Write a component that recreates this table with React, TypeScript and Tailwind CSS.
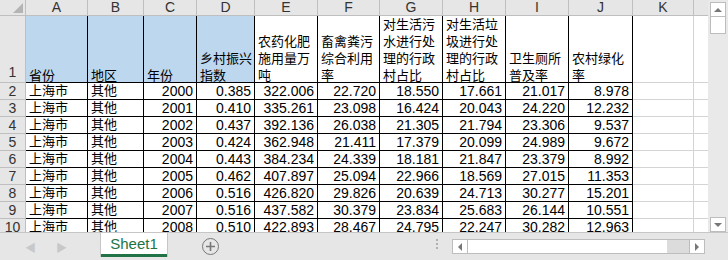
import React from 'react';

type Col = { key: string; w: number; head: string[]; blue?: boolean };

const COLS: Col[] = [
  { key: 'A', w: 62, head: ['省份'], blue: true },
  { key: 'B', w: 56, head: ['地区'], blue: true },
  { key: 'C', w: 53, head: ['年份'], blue: true },
  { key: 'D', w: 58, head: ['乡村振兴', '指数'], blue: true },
  { key: 'E', w: 63, head: ['农药化肥', '施用量万', '吨'] },
  { key: 'F', w: 62, head: ['畜禽粪污', '综合利用', '率'] },
  { key: 'G', w: 63, head: ['对生活污', '水进行处', '理的行政', '村占比'] },
  { key: 'H', w: 63, head: ['对生活垃', '圾进行处', '理的行政', '村占比'] },
  { key: 'I', w: 63, head: ['卫生厕所', '普及率'] },
  { key: 'J', w: 64, head: ['农村绿化', '率'] },
];

const ROWS: string[][] = [
  ['2000', '0.385', '322.006', '22.720', '18.550', '17.661', '21.017', '8.978'],
  ['2001', '0.410', '335.261', '23.098', '16.424', '20.043', '24.220', '12.232'],
  ['2002', '0.437', '392.136', '26.038', '21.305', '21.794', '23.306', '9.537'],
  ['2003', '0.424', '362.948', '21.411', '17.379', '20.099', '24.989', '9.672'],
  ['2004', '0.443', '384.234', '24.339', '18.181', '21.847', '23.379', '8.992'],
  ['2005', '0.462', '407.897', '25.094', '22.966', '18.569', '27.015', '11.353'],
  ['2006', '0.516', '426.820', '29.826', '20.639', '24.713', '30.277', '15.201'],
  ['2007', '0.516', '437.582', '30.379', '23.834', '25.683', '26.144', '10.551'],
  ['2008', '0.510', '422.893', '28.467', '24.795', '22.247', '30.282', '12.963'],
];

const font = "font-['Liberation_Sans','Noto_Sans_CJK_SC',sans-serif]";

function EmptyTail({ h }: { h: string }) {
  return (
    <>
      <div className={`w-[61px] shrink-0 border-r border-b border-[#d4d4d4] ${h}`} />
      <div className={`w-[14px] shrink-0 border-b border-[#d4d4d4] ${h}`} />
    </>
  );
}

export default function App() {
  return (
    <div className={`flex h-[260px] w-[728px] flex-col overflow-hidden bg-white text-[14px] text-black ${font}`}>
      <div className="flex h-[232px] shrink-0">
        <div className="flex w-[708px] shrink-0 flex-col overflow-hidden">
          {/* column letters */}
          <div className="flex h-[16px] shrink-0 bg-[#e6e6e6] text-[#333] leading-[15px]">
            <div className="relative w-[26px] shrink-0 border-r border-b border-[#bfbfbf]">
              <svg className="absolute right-[2px] bottom-[2px]" width="10" height="10" viewBox="0 0 10 10">
                <path d="M10 0V10H0Z" fill="#b4b4b4" />
              </svg>
            </div>
            {COLS.map((c) => (
              <div key={c.key} style={{ width: c.w }} className="shrink-0 border-r border-b border-[#bfbfbf] text-center">{c.key}</div>
            ))}
            <div className="w-[61px] shrink-0 border-r border-b border-[#bfbfbf] text-center">K</div>
            <div className="w-[14px] shrink-0 border-b border-[#bfbfbf]" />
          </div>

          {/* row 1 */}
          <div className="flex h-[67px] shrink-0">
            <div className="flex w-[26px] shrink-0 items-end justify-center border-r border-b border-[#bfbfbf] bg-[#e6e6e6] pb-[1px] leading-[17px] text-[#333]">1</div>
            {COLS.map((c) => (
              <div
                key={c.key}
                style={{ width: c.w }}
                className={`flex shrink-0 flex-col justify-end overflow-hidden border-r border-b border-black px-[3px] text-[13px] leading-[17px] whitespace-nowrap ${c.blue ? 'bg-[#bdd7ee]' : 'bg-white'}`}
              >
                <div className="translate-y-[2px]">
                  {c.head.map((l) => <div key={l}>{l}</div>)}
                </div>
              </div>
            ))}
            <EmptyTail h="h-[67px]" />
          </div>

          {ROWS.map((r, i) => (
            <div key={r[0]} className="flex h-[17px] shrink-0 leading-[16px]">
              <div className="w-[26px] shrink-0 border-r border-b border-[#bfbfbf] bg-[#e6e6e6] text-center text-[#333]">{i + 2}</div>
              <div className="w-[62px] shrink-0 border-r border-b border-black px-[3px] text-[13px]">上海市</div>
              <div className="w-[56px] shrink-0 border-r border-b border-black px-[3px] text-[13px]">其他</div>
              {r.map((v, j) => (
                <div key={j} style={{ width: COLS[j + 2].w }} className="shrink-0 border-r border-b border-black pr-[3px] text-right">{v}</div>
              ))}
              <EmptyTail h="h-[17px]" />
            </div>
          ))}
        </div>

        {/* vertical scrollbar */}
        <div className="flex w-[20px] shrink-0 flex-col bg-[#e9e9e9] pt-[2px] pl-[2px]">
          <div className="flex h-[15px] w-[16px] items-center justify-center border border-[#bdbdbd] bg-white">
            <div className="h-0 w-0 border-x-[4px] border-b-[4px] border-x-transparent border-b-[#777]" />
          </div>
          <div className="h-[17px] w-[16px] border border-t-0 border-[#bdbdbd] bg-white" />
          <div className="flex-1" />
          <div className="flex h-[15px] w-[16px] items-center justify-center border border-[#bdbdbd] bg-white">
            <div className="h-0 w-0 border-x-[4px] border-t-[4px] border-x-transparent border-t-[#777]" />
          </div>
        </div>
      </div>

      {/* sheet tabs bar */}
      <div className="flex h-[28px] shrink-0 items-start border-t border-[#c6c6c6] bg-[#e6e6e6]">
        <div className="flex w-[100px] items-center gap-[20px] pt-[7px] pl-[25px] text-[11px] text-[#c8c8c8]">
          <span>◀</span>
          <span>▶</span>
        </div>
        <div className="flex h-[24px] w-[68px] flex-col border-x border-[#c6c6c6] bg-white">
          <div className="flex-1 text-center text-[15px] leading-[21px] text-[#217346]">Sheet1</div>
          <div className="h-[3px] bg-[#217346]" />
        </div>
        <div className="mt-[5px] ml-[34px] flex h-[17px] w-[17px] items-center justify-center rounded-full border-[1.5px] border-[#777]">
          <svg width="9" height="9" viewBox="0 0 9 9"><path d="M4.5 0v9M0 4.5h9" stroke="#777" strokeWidth="1.6" /></svg>
        </div>
        <div className="mt-[6px] ml-[217px] flex flex-col gap-[2px]">
          <div className="h-[2px] w-[2px] bg-[#b0b0b0]" />
          <div className="h-[2px] w-[2px] bg-[#b0b0b0]" />
          <div className="h-[2px] w-[2px] bg-[#b0b0b0]" />
        </div>
        <div className="mt-[6px] ml-[14px] flex h-[15px] w-[253px] border border-[#bdbdbd] bg-white">
          <div className="flex w-[15px] items-center justify-center border-r border-[#bdbdbd]">
            <div className="h-0 w-0 border-y-[4px] border-r-[4px] border-y-transparent border-r-[#777]" />
          </div>
          <div className="flex-1" />
          <div className="w-[22px] bg-[#dcdcdc]" />
          <div className="flex w-[15px] items-center justify-center border-l border-[#bdbdbd]">
            <div className="h-0 w-0 border-y-[4px] border-l-[4px] border-y-transparent border-l-[#777]" />
          </div>
        </div>
      </div>
    </div>
  );
}
